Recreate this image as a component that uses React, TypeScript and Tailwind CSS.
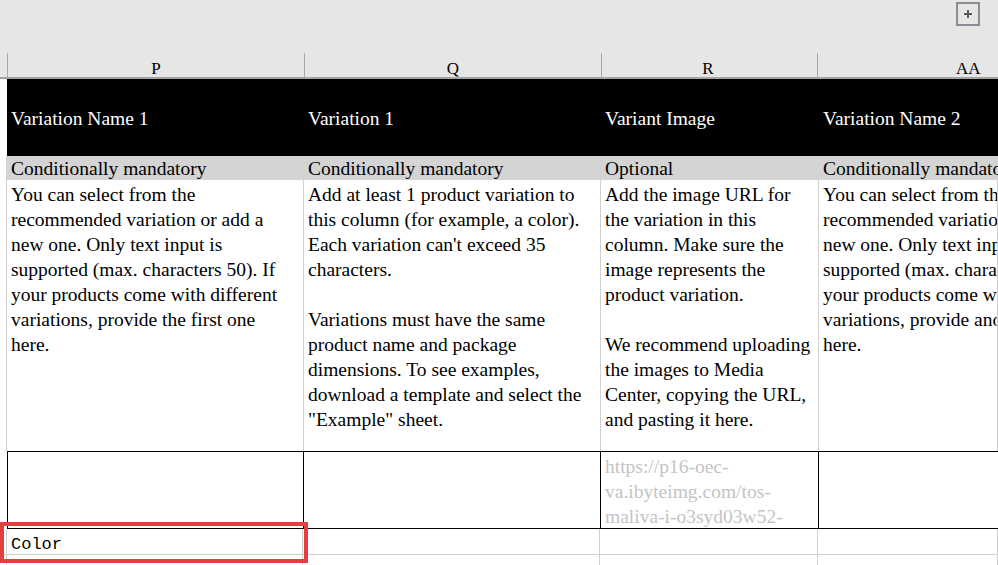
const cols = [
  { key: 'P', w: 'w-[297px]' },
  { key: 'Q', w: 'w-[297px]' },
  { key: 'R', w: 'w-[218px]' },
  { key: 'AA', w: 'flex-1' },
];

const headers = ['Variation Name 1', 'Variation 1', 'Variant Image', 'Variation Name 2'];
const required = ['Conditionally mandatory', 'Conditionally mandatory', 'Optional', 'Conditionally mandatory'];

const descriptions: string[][] = [
  [
    'You can select from the recommended variation or add a new one. Only text input is supported (max. characters 50). If your products come with different variations, provide the first one here.',
  ],
  [
    "Add at least 1 product variation to this column (for example, a color). Each variation can't exceed 35 characters.",
    'Variations must have the same product name and package dimensions. To see examples, download a template and select the "Example" sheet.',
  ],
  [
    'Add the image URL for the variation in this column. Make sure the image represents the product variation.',
    'We recommend uploading the images to Media Center, copying the URL, and pasting it here.',
  ],
  [
    'You can select from the recommended variation or add a new one. Only text input is supported (max. characters 50). If your products come with different variations, provide another one here.',
  ],
];

const serif = "font-['Liberation_Serif','Times_New_Roman',serif]";

export default function App() {
  return (
    <div className="relative h-[565px] w-[998px] overflow-hidden bg-white">
      {/* toolbar strip */}
      <div className="flex h-[53px] justify-end bg-[#e6e6e6] pt-[2px] pr-[18px]">
        <button className="flex h-[24px] w-[24px] items-center justify-center border-2 border-[#8a8d93] bg-[#e6e6e6]">
          <svg width="10" height="10" viewBox="0 0 10 10">
            <path d="M5 1v8M1 5h8" stroke="#5a5a5a" strokeWidth="2" />
          </svg>
        </button>
      </div>

      {/* column letters */}
      <div className="flex h-[26px] border-b-2 border-[#a3a3a3] bg-[#e6e6e6]">
        <div className="w-[7px] shrink-0" />
        {cols.map((c, i) => (
          <div
            key={c.key}
            className={`${i === 2 ? 'w-[213px]' : c.w} shrink-0 border-l border-[#a8a8a8] ${i === 3 ? 'ml-[3px] pl-[138px]' : 'text-center'} ${serif} pt-[3px] text-[17px] leading-[26px] text-black`}
          >
            {c.key}
          </div>
        ))}
      </div>

      {/* black header row */}
      <div className="flex">
        <div className="w-[7px] shrink-0" />
        <div className="flex h-[77px] flex-1 bg-black">
          {cols.map((c, i) => (
            <div key={c.key} className={`${c.w} shrink-0 flex items-center pt-[3px] pl-[4px] ${serif} text-[19.5px] text-white`}>
              {headers[i]}
            </div>
          ))}
        </div>
      </div>

      {/* requirement row */}
      <div className="flex">
        <div className="w-[7px] shrink-0 border-r border-[#d0d0d0]" />
        <div className="flex h-[24px] flex-1 bg-[#d4d4d4]">
          {cols.map((c, i) => (
            <div key={c.key} className={`${c.w} shrink-0 overflow-hidden whitespace-nowrap pl-[4px] ${serif} text-[19.5px] leading-[26px] text-black`}>
              {required[i]}
            </div>
          ))}
        </div>
      </div>

      {/* description row */}
      <div className="flex h-[271px]">
        <div className="w-[7px] shrink-0 border-r border-[#d0d0d0]" />
        {cols.map((c, i) => (
          <div
            key={c.key}
            className={`${c.w} shrink-0 overflow-hidden border-r border-[#d0d0d0] px-[4px] pt-[2px] ${serif} text-[19.5px] leading-[25px] text-black`}
          >
            <div className={i === 0 || i === 3 ? 'w-[284px]' : ''}>
              {descriptions[i].map((p, j) => (
                <p key={j} className={j > 0 ? 'mt-[25px]' : ''}>
                  {p}
                </p>
              ))}
            </div>
          </div>
        ))}
      </div>

      {/* example row */}
      <div className="flex h-[78px]">
        <div className="w-[7px] shrink-0" />
        <div className="flex flex-1 border-y border-l border-black">
          {cols.map((c, i) => (
            <div
              key={c.key}
              className={`${i === 0 ? 'w-[296px]' : c.w} shrink-0 overflow-hidden ${i < 3 ? 'border-r border-black' : ''} px-[4px] pt-[2px] ${serif} text-[19.5px] leading-[25px] text-[#c4c4c4]`}
            >
              {i === 2 && (
                <p className="whitespace-nowrap">
                  https://p16-oec-
                  <br />
                  va.ibyteimg.com/tos-
                  <br />
                  maliva-i-o3syd03w52-
                </p>
              )}
            </div>
          ))}
        </div>
      </div>

      {/* value row */}
      <div className="flex h-[26px] border-b border-[#d0d0d0]">
        <div className="w-[7px] shrink-0 border-r border-[#d0d0d0]" />
        {cols.map((c, i) => (
          <div
            key={c.key}
            className={`${i === 0 ? 'w-[296px]' : c.w} shrink-0 border-r border-[#d0d0d0] pt-[5px] pl-[4px] font-['Liberation_Mono',monospace] text-[17px] leading-[22px] text-black`}
          >
            {i === 0 ? 'Color' : ''}
          </div>
        ))}
      </div>

      <div className="flex h-[20px]">
        <div className="w-[7px] shrink-0 border-r border-[#d0d0d0]" />
        {cols.map((c, i) => (
          <div key={c.key} className={`${i === 0 ? 'w-[296px]' : c.w} shrink-0 border-r border-[#d0d0d0]`} />
        ))}
      </div>

      {/* highlight */}
      <div className="absolute top-[522px] left-0 h-[41px] w-[308px] border-[4px] border-[#e53e3e]" />
    </div>
  );
}
